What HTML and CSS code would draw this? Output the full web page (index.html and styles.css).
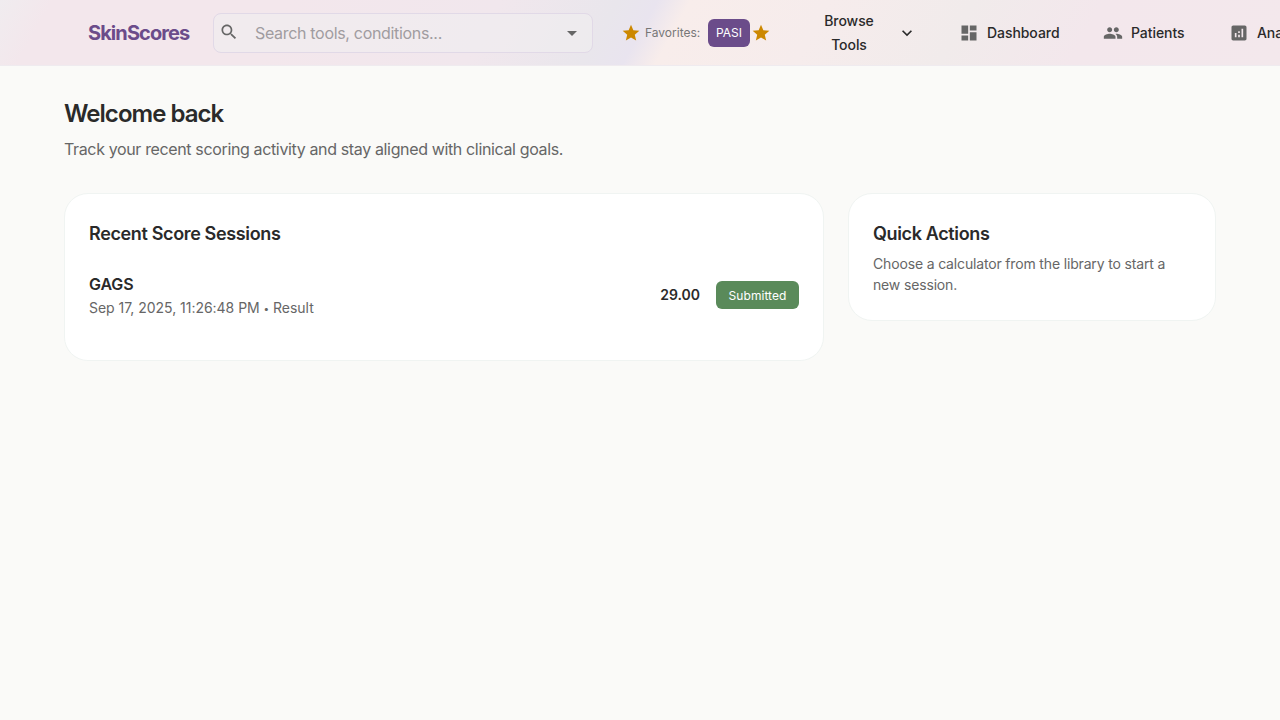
FILE: index.html
```html
<!DOCTYPE html>
<html lang="en">
<head>
<meta charset="utf-8">
<title>SkinScores</title>
<link rel="stylesheet" href="styles.css">
</head>
<body>
<header class="topbar">
  <div class="brand">SkinScores</div>
  <div class="search">
    <svg class="search-icon" viewBox="0 0 24 24"><path d="M15.5 14h-.79l-.28-.27C15.41 12.59 16 11.11 16 9.5 16 5.91 13.09 3 9.5 3S3 5.91 3 9.5 5.91 16 9.5 16c1.61 0 3.09-.59 4.23-1.57l.27.28v.79l5 4.99L20.49 19zm-6 0C7.01 14 5 11.99 5 9.5S7.01 5 9.5 5 14 7.01 14 9.5 11.99 14 9.5 14"/></svg>
    <span class="placeholder">Search tools, conditions...</span>
    <svg class="caret" viewBox="0 0 24 24"><path d="m7 10 5 5 5-5z"/></svg>
  </div>
  <div class="favorites">
    <svg class="star" viewBox="0 0 24 24"><path d="M12 17.27 18.18 21l-1.64-7.03L22 9.24l-7.19-.61L12 2 9.19 8.63 2 9.24l5.46 4.73L5.82 21z"/></svg>
    <span class="fav-label">Favorites:</span>
    <span class="fav-chip">PASI</span>
    <svg class="star star-end" viewBox="0 0 24 24"><path d="M12 17.27 18.18 21l-1.64-7.03L22 9.24l-7.19-.61L12 2 9.19 8.63 2 9.24l5.46 4.73L5.82 21z"/></svg>
  </div>
  <nav class="nav">
    <a class="browse"><span class="browse-text">Browse Tools</span><svg class="chevron" viewBox="0 0 24 24"><path d="M7.41 8.59 12 13.17l4.59-4.58L18 10l-6 6-6-6z"/></svg></a>
    <a class="nav-item dashboard"><svg class="nav-icon" viewBox="0 0 24 24"><path d="M3 13h8V3H3zm0 8h8v-6H3zm10 0h8V11h-8zm0-18v6h8V3z"/></svg>Dashboard</a>
    <a class="nav-item patients"><svg class="nav-icon" viewBox="0 0 24 24"><path d="M16 11c1.66 0 2.99-1.34 2.99-3S17.66 5 16 5s-3 1.34-3 3 1.34 3 3 3m-8 0c1.66 0 2.99-1.34 2.99-3S9.66 5 8 5 5 6.34 5 8s1.34 3 3 3m0 2c-2.33 0-7 1.17-7 3.5V19h14v-2.5c0-2.33-4.67-3.5-7-3.5m8 0c-.29 0-.62.02-.97.05 1.16.84 1.97 1.97 1.97 3.45V19h6v-2.5c0-2.33-4.67-3.5-7-3.5"/></svg>Patients</a>
    <a class="nav-item analytics"><svg class="nav-icon" viewBox="0 0 24 24"><path d="M19 3H5c-1.1 0-2 .9-2 2v14c0 1.1.9 2 2 2h14c1.1 0 2-.9 2-2V5c0-1.1-.9-2-2-2M9 17H7v-5h2zm4 0h-2v-3h2zm0-5h-2v-2h2zm4 5h-2V7h2z"/></svg>Analytics</a>
  </nav>
</header>
<main class="content">
  <h1 class="title">Welcome back</h1>
  <p class="subtitle">Track your recent scoring activity and stay aligned with clinical goals.</p>
  <div class="cards">
    <section class="card sessions">
      <h2 class="card-title">Recent Score Sessions</h2>
      <div class="session">
        <div class="session-info">
          <div class="session-name">GAGS</div>
          <div class="session-meta">Sep 17, 2025, 11:26:48 PM <span class="dot">•</span> Result</div>
        </div>
        <span class="score">29.00</span>
        <span class="status">Submitted</span>
      </div>
    </section>
    <section class="card actions">
      <h2 class="card-title">Quick Actions</h2>
      <p class="card-text">Choose a calculator from the library to start a new session.</p>
    </section>
  </div>
</main>
</body>
</html>
```
FILE: styles.css
```css
* { box-sizing: border-box; }
body { margin: 0; min-height: 720px; overflow: hidden; background: #fafaf8; color: #2a2a2a; font-family: Inter, "Liberation Sans", sans-serif; }
h1, h2, p { margin: 0; }
svg { display: block; flex: none; fill: currentColor; }
.topbar { display: flex; align-items: center; height: 66px; padding-left: 88px; overflow: hidden; white-space: nowrap; border-bottom: 1px solid #efebef;
  background: linear-gradient(119deg, #f0ecef 0%, #f3e7ec 4%, #f3e7ec 22%, #f1e7ed 38%, #e9e6ec 47%, #e9e4ef 50%, #f8edeb 52.5%, #f6ecec 63%, #f1ebeb 74%, #f3e7ec 84%, #f3e8ec 100%); }
.brand { flex: none; width: 125px; font-size: 20px; font-weight: 700; letter-spacing: -.92px; color: #6b4c8a; }
.search { flex: none; display: flex; align-items: center; width: 380px; height: 40px; padding: 0 11px 0 5px; border: 1px solid #e1d9e7; border-radius: 8px; background: rgba(240, 238, 240, .6); }
.search-icon { width: 20px; height: 20px; margin-top: -1px; color: #666; }
.placeholder { flex: 1; margin-left: 16px; font-size: 16px; letter-spacing: -.32px; color: #a09ca0; }
.caret { width: 24px; height: 24px; margin-right: -3px; color: #666; }
.favorites { flex: none; display: flex; align-items: center; width: 176px; margin-left: 28px; }
.star { width: 20px; height: 20px; color: #cc8800; }
.fav-label { width: 63px; margin-left: 4px; font-size: 12px; color: #777; }
.fav-chip { width: 42px; height: 28px; border-radius: 6px; background: #6b4c8a; color: #fff; font-size: 12px; line-height: 28px; text-align: center; }
.star-end { margin-left: 1px; }
.nav { flex: none; display: flex; align-items: center; font-size: 14px; font-weight: 500; letter-spacing: -.06px; }
.browse { display: flex; align-items: center; width: 138px; padding-left: 22px; }
.browse-text { width: 60px; white-space: normal; text-align: center; line-height: 24px; }
.chevron { width: 20px; height: 20px; margin-left: 18px; }
.nav-item { display: flex; align-items: center; gap: 8px; }
.nav-icon { width: 20px; height: 20px; color: #666; }
.dashboard { width: 144px; margin-left: 24px; }
.patients { width: 126px; }
.content { padding: 32px 64px; }
.title { font-size: 24px; font-weight: 600; line-height: 32px; letter-spacing: -.96px; }
.subtitle { margin-top: 7px; font-size: 16px; line-height: 24px; letter-spacing: -.36px; color: #666; }
.cards { display: grid; grid-template-columns: 760px 368px; align-items: start; gap: 24px; margin-top: 32px; }
.card { padding: 25px 24px 24px; border: 1px solid #f0f4f2; border-radius: 24px; background: #fff; }
.sessions { height: 168px; }
.actions { height: 128px; }
.card-title { font-size: 18px; font-weight: 600; line-height: 29px; letter-spacing: -.36px; }
.session { display: flex; align-items: center; margin-top: 24px; }
.session-info { flex: 1; }
.session-name { font-size: 16px; font-weight: 600; line-height: 24px; letter-spacing: -.1px; }
.session-meta { font-size: 14px; line-height: 23px; letter-spacing: -.03px; color: #666; }
.dot { font-size: 10px; vertical-align: 1px; }
.score { margin: -3px -1px 0 0; font-size: 14px; font-weight: 600; }
.status { width: 83px; height: 28px; margin: -2px 0 0 17px; border-radius: 6px; background: #5a8a5a; color: #fff; font-size: 12px; line-height: 29px; letter-spacing: .05px; text-align: center; }
.card-text { margin-top: 5px; font-size: 14px; line-height: 21px; letter-spacing: -.16px; color: #666; }
```
